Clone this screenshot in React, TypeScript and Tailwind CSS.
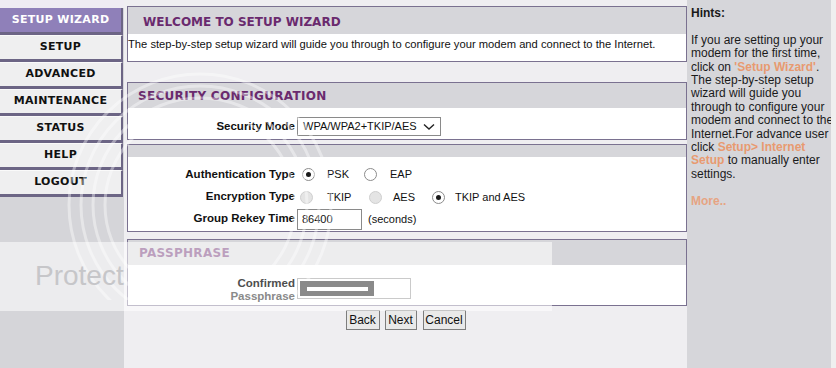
import React from "react";

const navItems = ["SETUP WIZARD", "SETUP", "ADVANCED", "MAINTENANCE", "STATUS", "HELP", "LOGOUT"];

function Radio({ checked = false, disabled = false }: { checked?: boolean; disabled?: boolean }) {
  return (
    <span
      className={`w-[13px] h-[13px] rounded-full border flex items-center justify-center shrink-0 ${
        disabled ? "bg-[#e4e4e4] border-[#cfcfcf]" : "bg-white border-[#8c8c8c]"
      }`}
    >
      {checked && <span className="w-[5px] h-[5px] rounded-full bg-[#1a1a1a]" />}
    </span>
  );
}

function Box({ children, className = "" }: { children: React.ReactNode; className?: string }) {
  return <div className={`border border-[#7a7190] bg-white ${className}`}>{children}</div>;
}

const headFont = { fontFamily: '"DejaVu Sans", Verdana, sans-serif' };

export default function App() {
  return (
    <div
      className="relative w-[836px] h-[368px] overflow-hidden flex bg-[#efeef1] text-[#111]"
      style={{ fontFamily: '"Liberation Sans", Arial, sans-serif' }}
    >
      {/* Sidebar */}
      <aside className="w-[124px] flex flex-col bg-[#d5d5d9]">
        <div className="h-[8px] bg-[#efecf3]" />
        {navItems.map((n, i) => (
          <div
            key={n}
            className={`w-[123px] h-[27px] border-b-[3px] border-r-[2px] border-[#6c6585] flex items-center justify-center text-[11px] font-bold tracking-[0.3px] ${
              i === 0 ? "bg-[#8f80b9] text-white" : "bg-[#efeff0] text-[#111] border-t border-t-[#fafafa]"
            }`}
            style={headFont}
          >
            {n}
          </div>
        ))}
        <div className="flex-1" />
      </aside>

      {/* Main */}
      <main className="w-[563px] flex flex-col pt-[6px] pl-[3px]">
        <Box>
          <div className="h-[27px] bg-[#d6d6da] flex items-center pt-[3px] pl-[15px] text-[12px] font-bold text-[#6a2a6e]" style={headFont}>
            WELCOME TO SETUP WIZARD
          </div>
          <div className="h-[27px] text-[11.2px] leading-[18px] pt-[1px] whitespace-nowrap">
            The step-by-step setup wizard will guide you through to configure your modem and connect to the Internet.
          </div>
        </Box>

        <Box className="mt-[20px]">
          <div className="h-[25px] bg-[#d6d6da] flex items-center pt-[1px] pl-[10px] text-[12px] font-bold text-[#6a2a6e] tracking-[0.3px]" style={headFont}>
            SECURITY CONFIGURATION
          </div>
          <div className="h-[31px] flex items-start pt-[9px]">
            <div className="w-[167px] text-right text-[11.5px] font-bold leading-[19px]">Security Mode</div>
            <div className="ml-[2px] w-[144px] h-[19px] border border-[#8a8a8a] bg-white flex items-center justify-between pl-[5px] pr-[5px] text-[11px]">
              <span>WPA/WPA2+TKIP/AES</span>
              <svg width="12" height="8" viewBox="0 0 12 8">
                <polyline points="1,1.5 6,6 11,1.5" fill="none" stroke="#222" strokeWidth="1.4" />
              </svg>
            </div>
          </div>
        </Box>

        <Box className="mt-[4px]">
          <div className="h-[12px] bg-[#d6d6da]" />
          <div className="h-[74px] pt-[6px] text-[11px]">
            <div className="h-[23px] flex items-center">
              <div className="w-[167px] text-right font-bold text-[11.5px]">Authentication Type</div>
              <div className="ml-[7px] w-[62px] flex items-center">
                <Radio checked />
                <span className="ml-[12px]">PSK</span>
              </div>
              <div className="flex items-center">
                <Radio />
                <span className="ml-[13px]">EAP</span>
              </div>
            </div>
            <div className="h-[22px] flex items-center">
              <div className="w-[167px] text-right font-bold text-[11.5px]">Encryption Type</div>
              <div className="ml-[5px] w-[69px] flex items-center">
                <Radio disabled />
                <span className="ml-[14px]">TKIP</span>
              </div>
              <div className="w-[63px] flex items-center">
                <Radio disabled />
                <span className="ml-[11px]">AES</span>
              </div>
              <div className="flex items-center">
                <Radio checked />
                <span className="ml-[10px]">TKIP and AES</span>
              </div>
            </div>
            <div className="h-[22px] flex items-center">
              <div className="w-[167px] text-right font-bold text-[11.5px]">Group Rekey Time</div>
              <div className="ml-[2px] w-[65px] h-[21px] border border-[#8a8a8a] bg-white flex items-center pl-[4px]">86400</div>
              <span className="ml-[6px]">(seconds)</span>
            </div>
          </div>
        </Box>

        <Box className="mt-[7px]">
          <div className="h-[25px] bg-[#d6d6da] flex items-center pl-[11px] text-[12px] font-bold text-[#6a2a6e] tracking-[0.3px]" style={headFont}>
            PASSPHRASE
          </div>
          <div className="h-[40px] flex items-start pt-[12px] text-[11.5px]">
            <div className="relative z-10 w-[167px] text-right font-bold leading-[13px] text-[#4e4e4e]">
              Confirmed
              <br />
              <span className="text-[#8a8a8a]">Passphrase</span>
            </div>
            <div className="ml-[2px] mt-[1px] w-[114px] h-[21px] border border-[#8a8a8a] bg-white" />
          </div>
        </Box>

        <div className="mt-[4px] flex justify-center gap-[5px] text-[12px] pr-[3px]">
          <button className="h-[20px] w-[34px] border border-[#7d7d7d] bg-[#e9e9e9] leading-none">Back</button>
          <button className="h-[20px] w-[32px] border border-[#7d7d7d] bg-[#e9e9e9] leading-none">Next</button>
          <button className="h-[20px] w-[43px] ml-[1px] border border-[#7d7d7d] bg-[#e9e9e9] leading-none">Cancel</button>
        </div>
      </main>

      {/* Hints */}
      <aside className="w-[144px] bg-[#d6d6da] pl-[4px] pt-[7px] text-[12px] leading-[13.4px] whitespace-nowrap text-[#1a1a1a]">
        <div className="font-bold">Hints:</div>
        <div className="h-[13.4px]" />
        <div>
          If you are setting up your
          <br />
          modem for the first time,
          <br />
          click on <span className="font-bold text-[#e89a70]">'Setup Wizard'</span>.
          <br />
          The step-by-step setup
          <br />
          wizard will guide you
          <br />
          through to configure your
          <br />
          modem and connect to the
          <br />
          Internet.For advance user
          <br />
          click <span className="font-bold text-[#e89a70]">Setup&gt; Internet</span>
          <br />
          <span className="font-bold text-[#e89a70]">Setup</span> to manually enter
          <br />
          settings.
        </div>
        <div className="h-[13.4px]" />
        <div className="font-bold text-[#e6a482]">More..</div>
      </aside>
      <div className="flex-1 bg-[#efefef]" />

      {/* Photo watermark overlays */}
      <svg className="absolute left-0 top-0 pointer-events-none" width="400" height="300" viewBox="0 0 400 300">
        <g fill="none" stroke="#ffffff" strokeOpacity="0.4" strokeWidth="3">
          <circle cx="200" cy="205" r="95" />
          <circle cx="200" cy="205" r="107" />
          <circle cx="200" cy="205" r="119" />
          <circle cx="200" cy="205" r="131" />
        </g>
      </svg>
      <div className="absolute left-0 top-[242px] w-[552px] h-[69px] bg-white/55 pointer-events-none" />
      <div className="absolute left-[35px] top-[262px] text-[28px] leading-none text-[#c6c6c9] whitespace-nowrap pointer-events-none">
        Protect
      </div>
      <div className="absolute left-[300px] top-[281px] w-[74px] h-[15px] bg-[#8a8a8a] pointer-events-none">
        <div className="absolute left-[7px] top-[6px] w-[61px] h-[4px] bg-white" />
      </div>
    </div>
  );
}
